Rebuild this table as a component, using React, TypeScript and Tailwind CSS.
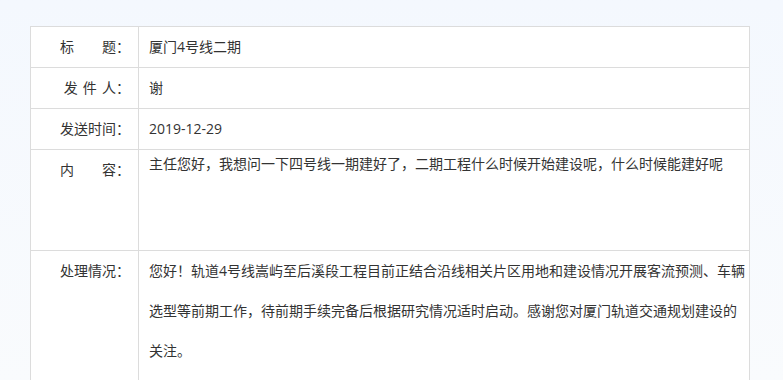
const font = { fontFamily: '"Open Sans", "Noto Sans CJK SC", sans-serif' };

function Row({ label, children, rowClass, labelClass, cellClass }: {
  label: React.ReactNode;
  children: React.ReactNode;
  rowClass?: string;
  labelClass?: string;
  cellClass?: string;
}) {
  return (
    <div className={`flex border-b border-[#dcdcdc] ${rowClass ?? ''}`}>
      <div className={`w-[108px] shrink-0 border-r border-[#dcdcdc] pr-[8px] text-right whitespace-pre ${labelClass ?? ''}`}>
        {label}
      </div>
      <div className={`flex-1 pl-[10px] pr-[2px] ${cellClass ?? ''}`}>{children}</div>
    </div>
  );
}

export default function App() {
  return (
    <div
      className="h-[380px] overflow-hidden bg-gradient-to-b from-[#f4f8fe] to-[#f9fbfd] pt-[26px] pl-[30px] text-[14px] text-[#333333]"
      style={font}
    >
      <div className="w-[720px] border-l border-r border-t border-[#dcdcdc] bg-white">
        <Row label="标　　题：" rowClass="h-[41px]" labelClass="leading-[40px]" cellClass="leading-[40px]">
          厦门4号线二期
        </Row>
        <Row label="发 件 人：" rowClass="h-[41px]" labelClass="leading-[40px] [word-spacing:1.5px]" cellClass="leading-[40px]">
          谢
        </Row>
        <Row label="发送时间：" rowClass="h-[41px]" labelClass="leading-[40px]" cellClass="leading-[40px]">
          2019-12-29
        </Row>
        <Row label="内　　容：" rowClass="h-[101px]" labelClass="leading-[40px]" cellClass="leading-[28px]">
          主任您好，我想问一下四号线一期建好了，二期工程什么时候开始建设呢，什么时候能建好呢
        </Row>
        <Row label="处理情况：" rowClass="min-h-[160px]" labelClass="leading-[40px]" cellClass="leading-[40px] pb-[20px]">
          您好！轨道4号线嵩屿至后溪段工程目前正结合沿线相关片区用地和建设情况开展客流预测、车辆选型等前期工作，待前期手续完备后根据研究情况适时启动。感谢您对厦门轨道交通规划建设的关注。
        </Row>
      </div>
    </div>
  );
}
